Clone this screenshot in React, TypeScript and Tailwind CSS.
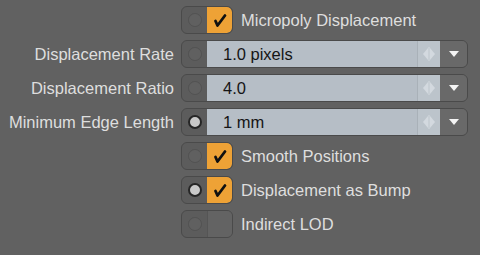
import React from "react";

const font = { fontFamily: '"Liberation Sans", Arial, sans-serif' };

function Circle({ active }: { active?: boolean }) {
  return (
    <div className="w-[25px] h-full flex items-center justify-center shrink-0">
      {active ? (
        <div className="w-[14px] h-[14px] rounded-full border-2 border-[#262626] bg-[#c9c9c9]" />
      ) : (
        <div className="w-[14px] h-[14px] rounded-full border border-[#525252] bg-[#606060]" />
      )}
    </div>
  );
}

function Check() {
  return (
    <svg width="16" height="16" viewBox="0 0 16 16">
      <path d="M3.5 9 L5.5 13.5 L13 3.5" fill="none" stroke="#111" strokeWidth="2.8" strokeLinecap="round" strokeLinejoin="round" />
    </svg>
  );
}

function CheckRow({ label, checked, active }: { label: string; checked?: boolean; active?: boolean }) {
  return (
    <div className="flex items-center h-[28px]">
      <div className="w-[181px] shrink-0" />
      <div className="flex h-[28px] w-[52px] rounded-[6px] border border-[#4a4a4a] bg-[#5c5c5c] overflow-hidden">
        <Circle active={active} />
        {checked ? (
          <div className="flex-1 bg-[#eea236] flex items-center justify-center rounded-r-[5px]">
            <Check />
          </div>
        ) : (
          <div className="flex-1 bg-[#636363] border-l border-[#555]" />
        )}
      </div>
      <div className="ml-[8px] text-[16.5px] text-[#dedede]" style={font}>
        {label}
      </div>
    </div>
  );
}

function Spinner() {
  return (
    <svg width="14" height="18" viewBox="0 0 14 18">
      <path d="M6 3 L1 9 L6 15 Z" fill="#d3d9df" />
      <path d="M8 3 L13 9 L8 15 Z" fill="#d3d9df" />
      <rect x="6.5" y="2" width="1" height="14" fill="#d3d9df" />
    </svg>
  );
}

function FieldRow({ label, value, active }: { label: string; value: string; active?: boolean }) {
  return (
    <div className="flex items-center h-[28px]">
      <div className="w-[174px] shrink-0 text-right text-[16.5px] text-[#dedede] whitespace-nowrap" style={font}>
        {label}
      </div>
      <div className="w-[7px] shrink-0" />
      <div className="flex h-[28px] w-[287px] rounded-[6px] border border-[#4a4a4a] bg-[#5c5c5c] overflow-hidden">
        <Circle active={active} />
        <div className="flex-1 bg-[#b6bec6] flex items-center pl-[16px] text-[16.5px] text-[#151515]" style={font}>
          {value}
        </div>
        <div className="w-[23px] bg-[#bcc4cb] border-l border-[#a9b1b8] flex items-center justify-center">
          <Spinner />
        </div>
        <div className="w-[27px] bg-[#696969] flex items-center justify-center">
          <svg width="10" height="6" viewBox="0 0 10 6">
            <path d="M0 0 L10 0 L5 6 Z" fill="#f4f4f4" />
          </svg>
        </div>
      </div>
    </div>
  );
}

export default function App() {
  return (
    <div className="w-[480px] h-[255px] bg-[#616161] pt-[6px] flex flex-col gap-[6px] overflow-hidden">
      <CheckRow label="Micropoly Displacement" checked />
      <FieldRow label="Displacement Rate" value="1.0 pixels" />
      <FieldRow label="Displacement Ratio" value="4.0" />
      <FieldRow label="Minimum Edge Length" value="1 mm" active />
      <CheckRow label="Smooth Positions" checked />
      <CheckRow label="Displacement as Bump" checked active />
      <CheckRow label="Indirect LOD" />
    </div>
  );
}
